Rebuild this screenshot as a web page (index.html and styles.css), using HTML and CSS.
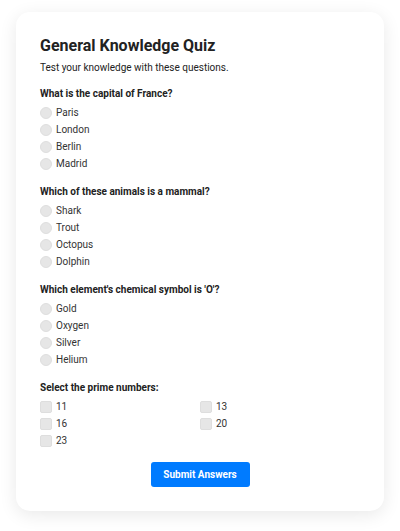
FILE: index.html
```html
<!DOCTYPE html>
<html lang="en">
  <head>
    <meta charset="UTF-8" />
    <meta name="viewport" content="width=device-width, initial-scale=1.0" />
    <title>General Knowledge Quiz</title>
    <link rel="stylesheet" href="styles.css">
  </head>
  <body>
    <form class="quiz">
      <h1>General Knowledge Quiz</h1>
      <p class="intro">Test your knowledge with these questions.</p>

      <div class="question">
        <div class="question-title">What is the capital of France?</div>
        <label class="option"><input type="radio" name="q1" /> Paris</label>
        <label class="option"><input type="radio" name="q1" /> London</label>
        <label class="option"><input type="radio" name="q1" /> Berlin</label>
        <label class="option"><input type="radio" name="q1" /> Madrid</label>
      </div>

      <div class="question">
        <div class="question-title">Which of these animals is a mammal?</div>
        <label class="option"><input type="radio" name="q2" /> Shark</label>
        <label class="option"><input type="radio" name="q2" /> Trout</label>
        <label class="option"><input type="radio" name="q2" /> Octopus</label>
        <label class="option"><input type="radio" name="q2" /> Dolphin</label>
      </div>

      <div class="question">
        <div class="question-title">Which element's chemical symbol is 'O'?</div>
        <label class="option"><input type="radio" name="q3" /> Gold</label>
        <label class="option"><input type="radio" name="q3" /> Oxygen</label>
        <label class="option"><input type="radio" name="q3" /> Silver</label>
        <label class="option"><input type="radio" name="q3" /> Helium</label>
      </div>

      <div class="question">
        <div class="question-title">Select the prime numbers:</div>
        <div class="check-grid">
          <label class="option"><input type="checkbox" name="q4" /> 11</label>
          <label class="option"><input type="checkbox" name="q4" /> 13</label>
          <label class="option"><input type="checkbox" name="q4" /> 16</label>
          <label class="option"><input type="checkbox" name="q4" /> 20</label>
          <label class="option"><input type="checkbox" name="q4" /> 23</label>
        </div>
      </div>

      <div class="actions">
        <button type="submit">Submit Answers</button>
      </div>
    </form>
  </body>
</html>
```

FILE: styles.css
```css
body {
  font-family: Roboto, Arial, sans-serif;
  background-color: #fff;
  color: #222;
  margin: 0;
  padding: 12px 16px 19px;
}
.quiz {
  background: white;
  border-radius: 14px;
  box-shadow: 0 4px 18px rgba(0, 0, 0, 0.09);
  padding: 24px;
}
h1 {
  font-size: 16px;
  line-height: 20px;
  font-weight: 700;
  margin: 0 0 4px;
}
.intro {
  font-size: 10px;
  line-height: 16px;
  margin: 0 0 11px;
}
.question {
  margin-bottom: 13px;
}
.question-title {
  font-size: 10px;
  font-weight: 700;
  line-height: 14px;
  margin-bottom: 3px;
}
.option {
  display: flex;
  align-items: center;
  gap: 4px;
  height: 17px;
  font-size: 10px;
  color: #333;
}
.option input {
  appearance: none;
  margin: 0;
  width: 12px;
  height: 12px;
  background: #e6e6e6;
  border: 1px solid #dedede;
  border-radius: 50%;
}
.option input[type="checkbox"] {
  border-radius: 2px;
}
.check-grid {
  display: grid;
  grid-template-columns: 1fr 1fr;
}
.actions {
  display: flex;
  justify-content: center;
}
button {
  background-color: #007bff;
  color: white;
  border: none;
  border-radius: 3px;
  font-family: inherit;
  font-size: 10px;
  font-weight: 700;
  width: 99px;
  height: 25px;
  cursor: pointer;
}
button:hover {
  background-color: #0056b3;
}
```
